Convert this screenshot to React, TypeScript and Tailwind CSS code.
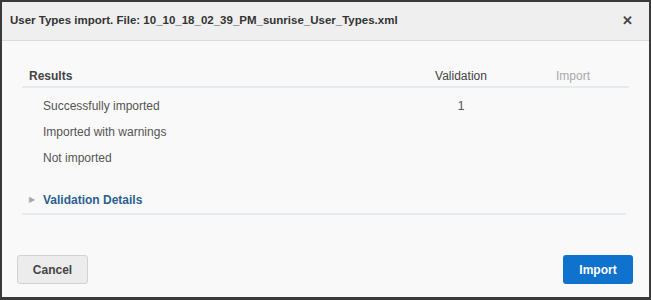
function Row({ label, value }: { label: string; value?: string }) {
  return (
    <div className="flex items-center h-[26px] pl-[21px]">
      <span className="flex-1">{label}</span>
      <span className="w-[90px] text-center mr-[123px]">{value}</span>
    </div>
  );
}

function App() {
  return (
    <div
      className="w-[651px] h-[300px] bg-[#3a3a3a] p-[2px] pb-[3px]"
      style={{ fontFamily: '"Liberation Sans", Arial, sans-serif' }}
    >
      <div className="h-full flex flex-col bg-[#f9f9f9]">
        <div className="h-[39px] flex items-center justify-between bg-[#efefef] border-b border-[#dcdcdc] pl-[8px] pr-[16px]">
          <span className="text-[11.5px] font-bold text-[#333]">
            User Types import. File: 10_10_18_02_39_PM_sunrise_User_Types.xml
          </span>
          <span className="text-[13px] font-bold text-[#444]">✕</span>
        </div>

        <div className="mx-[20px] mt-[25px] text-[12px] text-[#555]">
          <div className="flex items-center h-[22px] pl-[7px] border-b-2 border-[#e3eaf0] text-[#444]">
            <span className="flex-1 font-bold">Results</span>
            <span className="w-[90px] text-center mr-[22px]">Validation</span>
            <span className="w-[90px] text-center text-[#aaa] mr-[11px]">Import</span>
          </div>
          <div className="pt-[5px]">
            <Row label="Successfully imported" value="1" />
            <Row label="Imported with warnings" />
            <Row label="Not imported" />
          </div>
          <div className="flex items-center h-[28px] mt-[16px] pl-[7px] border-b-2 border-[#e3eaf0] mr-[3px]">
            <span className="text-[8px] text-[#aaa] mr-[8px]">▶</span>
            <span className="font-bold text-[12px] text-[#2b5f92]">Validation Details</span>
          </div>
        </div>

        <div className="mt-auto mb-[13px] flex justify-between pl-[15px] pr-[16px]">
          <button className="w-[71px] h-[29px] rounded-[3px] border border-[#d2d2d2] bg-[#ececec] text-[12px] font-bold text-[#444]">
            Cancel
          </button>
          <button className="w-[70px] h-[29px] rounded-[3px] bg-[#0f72cc] text-[12px] font-bold text-white">
            Import
          </button>
        </div>
      </div>
    </div>
  );
}

export default App;
